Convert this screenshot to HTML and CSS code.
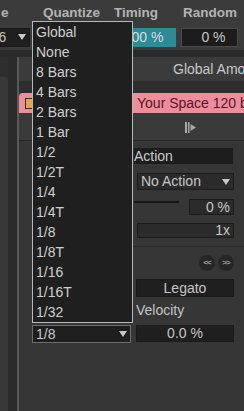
FILE: index.html
```html
<!DOCTYPE html>
<html lang="en">
<head>
  <meta charset="UTF-8" />
  <title>Clip Launch</title>
  <link rel="stylesheet" href="styles.css">
</head>
<body>
  <div class="labels">
    <span class="lbl">e</span>
    <span class="lbl">Quantize</span>
    <span class="lbl">Timing</span>
    <span class="lbl">Random</span>
  </div>
  <div class="fields">
    <div class="field chooser first">1/16<span class="tri"></span></div>
    <div class="field teal">100 %</div>
    <div class="field random">0 %</div>
  </div>
  <div class="band"></div>

  <div class="main">
    <div class="rails">
      <div class="rail outer"><div class="rail-panel"></div></div>
      <div class="rail inner"></div>
      <div class="rail edge"></div>
    </div>

    <div class="clip">
      <div class="groove">Global Amount</div>
      <div class="gap"></div>
      <div class="title">
        <div class="title-left"><span class="swatch"></span></div>
        <div class="title-name">Your Space 120 bpm</div>
      </div>
      <div class="strip">
        <div></div>
        <div class="strip-icon">
          <svg width="12" height="11" viewBox="0 0 12 11">
            <rect x="0" y="0" width="2" height="11" fill="#a8a8a8"/>
            <rect x="3" y="0" width="1.5" height="11" fill="#a8a8a8"/>
            <polygon points="5.5,2 11,5.5 5.5,9" fill="#a8a8a8"/>
          </svg>
        </div>
      </div>

      <div class="panes">
        <div class="launch">
          <div class="field chooser quant">1/8<span class="tri"></span></div>
        </div>

        <div class="follow">
          <div class="head">Action</div>
          <div class="field chooser action">No Action<span class="tri"></span></div>
          <div class="slider-row">
            <div class="slider"></div>
            <div class="field num small">0 %</div>
          </div>
          <div class="field num wide">1x</div>
          <div class="divider"></div>
          <div class="nav">
            <span class="circle">&lt;&lt;</span>
            <span class="circle">&gt;&gt;</span>
          </div>
          <div class="field center legato">Legato</div>
          <div class="label">Velocity</div>
          <div class="field center velo">0.0 %</div>
        </div>
      </div>
    </div>
  </div>

  <div class="menu">
    <div class="item">Global</div>
    <div class="item">None</div>
    <div class="item">8 Bars</div>
    <div class="item">4 Bars</div>
    <div class="item">2 Bars</div>
    <div class="item">1 Bar</div>
    <div class="item">1/2</div>
    <div class="item">1/2T</div>
    <div class="item">1/4</div>
    <div class="item">1/4T</div>
    <div class="item">1/8</div>
    <div class="item">1/8T</div>
    <div class="item">1/16</div>
    <div class="item">1/16T</div>
    <div class="item">1/32</div>
  </div>
</body>
</html>
```

FILE: styles.css
```css
* {
  margin: 0;
  padding: 0;
  box-sizing: border-box;
}
body {
  position: relative;
  width: 244px;
  height: 411px;
  overflow: hidden;
  background-color: #363636;
  font-family: "Liberation Sans", Arial, sans-serif;
  font-size: 14px;
  color: #c6c6c6;
}
.labels {
  display: grid;
  grid-template-columns: 43px 71px 69px 1fr;
  align-items: center;
  height: 25px;
  background-color: #3b3b3b;
  font-weight: bold;
  font-size: 13.5px;
  color: #b3b3b3;
}
.lbl:first-child {
  padding-left: 1px;
}
.fields {
  display: flex;
  height: 25px;
  padding-top: 3px;
  background-color: #3b3b3b;
}
.field {
  height: 19px;
  line-height: 17px;
  background-color: #1f1f1f;
  border: 1px solid #1a1a1a;
  color: #c6c6c6;
}
.chooser {
  position: relative;
  padding-left: 3px;
}
.tri {
  position: absolute;
  right: 3px;
  top: 5px;
  width: 0;
  height: 0;
  border-left: 4px solid transparent;
  border-right: 4px solid transparent;
  border-top: 6px solid #c8c8c8;
}
.first {
  flex-shrink: 0;
  width: 52px;
  margin-left: -22px;
  padding-left: 0;
}
.teal {
  flex-shrink: 0;
  width: 65px;
  margin-left: 81px;
  background-color: #2b8c97;
  border-color: #2b8c97;
  color: #dcdcdc;
  text-align: center;
}
.random {
  flex-shrink: 0;
  width: 57px;
  margin-left: 5px;
  border-color: #4a4a4a;
  background-color: #1c1c1c;
  text-align: center;
  padding-left: 8px;
}
.band {
  height: 7px;
  background-color: #2a2a2a;
}
.main {
  display: flex;
  height: 354px;
}
.rails {
  display: flex;
  width: 19px;
}
.rail.outer {
  width: 8px;
  background-color: #2d2d2d;
}
.rail-panel {
  margin-top: 20px;
  height: 100%;
  background-color: #373737;
  border-top-right-radius: 3px;
}
.rail.inner {
  width: 9px;
  background-color: #2b2b2b;
}
.rail.edge {
  width: 2px;
  background-color: #585858;
}
.clip {
  flex: 1;
  display: flex;
  flex-direction: column;
}
.groove {
  height: 24px;
  line-height: 24px;
  padding-left: 154px;
  white-space: nowrap;
  overflow: hidden;
  background-color: #3b3b3b;
  color: #c8c8c8;
}
.gap {
  height: 12px;
  background-color: #2e2e2e;
}
.title {
  display: grid;
  grid-template-columns: 114px 1fr;
  height: 20px;
  background-color: #ef8e9b;
  border-top-left-radius: 4px;
}
.title-left {
  display: flex;
  align-items: center;
  padding-left: 6px;
}
.swatch {
  width: 8px;
  height: 11px;
  background-color: #e8a24e;
  border: 1px solid #3a2a20;
}
.title-name {
  padding-left: 4px;
  line-height: 20px;
  white-space: nowrap;
  overflow: hidden;
  color: #571528;
}
.strip {
  display: grid;
  grid-template-columns: 114px 1fr;
  height: 28px;
  border-bottom: 1px solid #262626;
  background-color: #3a3a3a;
}
.strip-icon {
  display: flex;
  justify-content: center;
  align-items: center;
  padding-right: 16px;
  padding-top: 2px;
}
.panes {
  flex: 1;
  display: grid;
  grid-template-columns: 114px 1fr;
}
.launch {
  padding: 184px 0 0 13px;
}
.quant {
  width: 99px;
  height: 18px;
  border-color: #6c6c6c;
  background-color: #1e1e1e;
}
.follow {
  display: flex;
  flex-direction: column;
  padding-left: 1px;
}
.head {
  width: 99px;
  height: 16px;
  line-height: 16px;
  margin-top: 7px;
  background-color: #1d1d1d;
  color: #cacaca;
}
.action {
  width: 97px;
  height: 17px;
  line-height: 15px;
  margin: 9px 0 0 3px;
  background-color: #2b2b2b;
  border-color: #1c1c1c;
}
.slider-row {
  display: flex;
  justify-content: space-between;
  width: 100px;
  height: 16px;
  margin-top: 9px;
}
.slider {
  width: 45px;
  height: 2px;
  margin-top: 2px;
  background-color: #161616;
}
.num {
  text-align: right;
  padding-right: 3px;
  background-color: #2b2b2b;
  border-color: #1c1c1c;
}
.small {
  width: 45px;
  height: 16px;
  line-height: 14px;
}
.wide {
  width: 97px;
  height: 15px;
  line-height: 13px;
  margin: 8px 0 0 3px;
}
.divider {
  height: 1px;
  margin: 8px 0 0 -1px;
  background-color: #2c2c2c;
}
.nav {
  display: flex;
  gap: 3px;
  width: 100px;
  justify-content: flex-end;
  margin-top: 8px;
}
.circle {
  width: 16px;
  height: 16px;
  border-radius: 50%;
  background-color: #262626;
  color: #9a9a9a;
  font-size: 8px;
  font-weight: bold;
  line-height: 16px;
  text-align: center;
  letter-spacing: -1px;
}
.center {
  text-align: center;
  width: 98px;
  margin-left: 2px;
  background-color: #1f1f1f;
}
.legato {
  height: 18px;
  line-height: 16px;
  margin-top: 8px;
}
.label {
  height: 17px;
  line-height: 17px;
  margin: 5px 0 0 2px;
  color: #c4c4c4;
}
.velo {
  height: 17px;
  line-height: 15px;
  margin-top: 6px;
}
.menu {
  position: absolute;
  left: 32px;
  top: 21px;
  width: 101px;
  background-color: #1f1f1f;
  border: 1px solid #b8b8b8;
}
.item {
  height: 20px;
  line-height: 20px;
  padding-left: 3px;
  color: #cfcfcf;
}
```
